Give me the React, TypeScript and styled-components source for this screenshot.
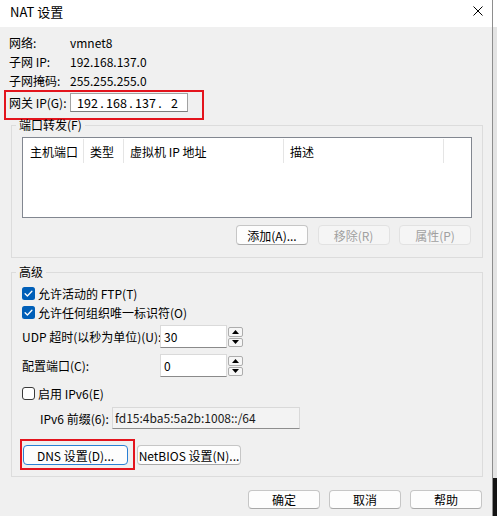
import React from "react";
import styled, { createGlobalStyle, css } from "styled-components";

const GlobalStyle = createGlobalStyle`
  html, body { margin: 0; padding: 0; }
  body {
    width: 497px; height: 516px; overflow: hidden; background: #e6e6e6;
    font-family: "Noto Sans CJK SC", "Noto Sans", sans-serif;
    font-size: 12px; color: #000;
  }
  * { box-sizing: border-box; }
`;

const Screen = styled.div`
  display: flex;
  width: 497px;
  height: 516px;
`;

const Dialog = styled.div`
  width: 493px;
  height: 516px;
  display: flex;
  flex-direction: column;
  background: #f0f0f0;
  border-right: 1px solid #8e8e8e;
`;

const BehindStrip = styled.div`
  flex: 1;
  background: linear-gradient(to bottom, #ffffff 0 27px, #e4e4e4 27px 478px, #141414 478px);
`;

const TitleBar = styled.div`
  height: 27px;
  flex: none;
  background: #ffffff;
  display: flex;
  align-items: flex-start;
  justify-content: space-between;
  padding: 4px 9px 0 10px;
`;

const Title = styled.div`
  font-size: 13px;
  line-height: 16px;
`;

const CloseButton = styled.div`
  width: 10px;
  height: 10px;
  margin-top: 2px;
  display: flex;
`;

const Body = styled.div`
  display: flex;
  flex-direction: column;
  padding-top: 6px;
`;

const InfoGrid = styled.div`
  display: grid;
  grid-template-columns: 61px auto;
  grid-auto-rows: 19px;
  margin-left: 9px;
  line-height: 19px;
`;

const HighlightSlot = styled.div`
  margin-left: 4px;
`;

const Highlight = styled.div<{ $w: number; $h: number; $pad: string }>`
  border: 2px solid #e3141d;
  width: ${(p) => p.$w}px;
  height: ${(p) => p.$h}px;
  padding: ${(p) => p.$pad};
  flex: none;
`;

const GatewayRow = styled.div`
  display: grid;
  grid-template-columns: 61px 118px;
  line-height: 19px;
`;

const IpBox = styled.div`
  height: 19px;
  width: 118px;
  background: #ffffff;
  border: 1px solid #a2a2a2;
  border-bottom-color: #7c7c7c;
  display: grid;
  grid-template-columns: 23px 6px 23px 6px 23px 6px 23px;
  padding-left: 5px;
  font-size: 12.5px;
  line-height: 17px;
  text-align: center;
`;

const Group = styled.fieldset<{ $mt: number }>`
  margin: ${(p) => p.$mt}px 9px 0 11px;
  border: 1px solid #dcdcdc;
  padding: 6px 10px 0 10px;
  min-width: 0;
`;

const Legend = styled.legend`
  font-size: 12px;
  line-height: 12px;
  padding: 0 3px;
  margin-left: -6px;
`;

const ListBox = styled.div`
  height: 81px;
  background: #ffffff;
  border: 1px solid #828790;
`;

const ListHeader = styled.div`
  display: grid;
  grid-template-columns: 61px 40px 160px 160px;
  padding-top: 1px;
`;

const HeaderCell = styled.div<{ $first?: boolean }>`
  height: 24px;
  line-height: 24px;
  padding-top: 1px;
  padding-left: ${(p) => (p.$first ? 7 : 6)}px;
  border-right: 1px solid #e5e5e5;
  white-space: nowrap;
`;

const ButtonRow = styled.div<{ $mt: number; $gap: number; $pr: number; $pb: number }>`
  display: flex;
  justify-content: flex-end;
  gap: ${(p) => p.$gap}px;
  margin-top: ${(p) => p.$mt}px;
  padding-right: ${(p) => p.$pr}px;
  padding-bottom: ${(p) => p.$pb}px;
`;

const Button = styled.div<{ $w: number; $h?: number; $disabled?: boolean; $focus?: boolean }>`
  width: ${(p) => p.$w}px;
  height: ${(p) => p.$h ?? 20}px;
  border-radius: 4px;
  display: flex;
  align-items: center;
  justify-content: center;
  white-space: nowrap;
  font-size: 12px;
  flex: none;
  background: #fdfdfd;
  border: 1px solid #c6c6c6;
  border-bottom-color: #a8a8a8;
  ${(p) =>
    p.$disabled &&
    css`
      background: #f5f5f5;
      border-color: #e2e2e2;
      color: #a0a0a0;
    `}
  ${(p) =>
    p.$focus &&
    css`
      border-color: #2a7fd4;
      background: #fdfdfd;
    `}
`;

const AdvancedBody = styled.div`
  display: flex;
  flex-direction: column;
  padding-bottom: 6px;
`;

const CheckRow = styled.div<{ $mt?: number }>`
  height: 19px;
  display: flex;
  align-items: center;
  gap: 3px;
  margin-top: ${(p) => p.$mt ?? 0}px;
  line-height: 19px;
`;

const FieldRow = styled.div<{ $mt: number; $cols: string; $pl?: number; $h: number }>`
  display: grid;
  grid-template-columns: ${(p) => p.$cols};
  align-items: center;
  height: ${(p) => p.$h}px;
  margin-top: ${(p) => p.$mt}px;
  padding-left: ${(p) => p.$pl ?? 0}px;
  white-space: nowrap;
`;

const Spinner = styled.div`
  display: flex;
  height: 23px;
`;

const SpinInput = styled.div`
  width: 67px;
  height: 23px;
  background: #ffffff;
  border: 1px solid #dadada;
  border-bottom-color: #8a8a8a;
  padding-left: 3px;
  line-height: 21px;
`;

const SpinButtons = styled.div`
  width: 16px;
  display: flex;
  flex-direction: column;
  gap: 1px;
  padding: 2px 0 1px 1px;
`;

const SpinButton = styled.div`
  flex: 1;
  background: #f6f6f6;
  border: 1px solid #adadad;
  border-radius: 2px;
  display: flex;
  align-items: center;
  justify-content: center;
`;

const DisabledInput = styled.div`
  height: 22px;
  background: #f3f3f3;
  border: 1px solid #d9d9d9;
  border-bottom-color: #8e8e8e;
  padding-left: 2px;
  line-height: 20px;
  color: #1a1a1a;
`;

const DnsRow = styled.div`
  display: flex;
  align-items: flex-start;
  gap: 2px;
  margin-top: 10px;
  margin-left: -2px;
`;

const NetBiosWrap = styled.div`
  margin-top: 6px;
`;

const Footer = styled.div`
  display: flex;
  justify-content: flex-end;
  gap: 9px;
  margin-top: 13px;
  padding-right: 10px;
`;

const CheckBox: React.FC<{ checked?: boolean }> = ({ checked }) => (
  <svg width="13" height="13" viewBox="0 0 13 13" style={{ flex: "none" }}>
    {checked ? (
      <>
        <rect x="0" y="0" width="13" height="13" rx="2.5" fill="#005fb8" />
        <path d="M3.1 6.7 L5.4 9 L9.9 4.3" fill="none" stroke="#ffffff" strokeWidth="1.3" strokeLinecap="round" strokeLinejoin="round" />
      </>
    ) : (
      <rect x="0.5" y="0.5" width="12" height="12" rx="2.5" fill="#ffffff" stroke="#3a3a3a" strokeWidth="1" />
    )}
  </svg>
);

const Arrow: React.FC<{ up?: boolean }> = ({ up }) => (
  <svg width="7" height="4" viewBox="0 0 7 4">
    <polygon points={up ? "0,4 3.5,0 7,4" : "0,0 7,0 3.5,4"} fill="#000" />
  </svg>
);

const SpinBox: React.FC<{ value: string }> = ({ value }) => (
  <Spinner>
    <SpinInput>{value}</SpinInput>
    <SpinButtons>
      <SpinButton>
        <Arrow up />
      </SpinButton>
      <SpinButton>
        <Arrow />
      </SpinButton>
    </SpinButtons>
  </Spinner>
);

const ipParts = ["192", "168", "137", "2"];

export default function App() {
  return (
    <>
      <GlobalStyle />
      <Screen>
        <Dialog>
          <TitleBar>
            <Title>NAT 设置</Title>
            <CloseButton>
              <svg width="10" height="10" viewBox="0 0 10 10">
                <path d="M0.5 0.5 L9.5 9.5 M9.5 0.5 L0.5 9.5" stroke="#000" strokeWidth="1" />
              </svg>
            </CloseButton>
          </TitleBar>
          <Body>
            <InfoGrid>
              <span>网络:</span>
              <span>vmnet8</span>
              <span>子网 IP:</span>
              <span>192.168.137.0</span>
              <span>子网掩码:</span>
              <span>255.255.255.0</span>
            </InfoGrid>
            <HighlightSlot>
              <Highlight $w={200} $h={30} $pad="1px 14px 7px 3px">
                <GatewayRow>
                  <span>网关 IP(G):</span>
                  <IpBox>
                    {ipParts.map((part, i) => (
                      <React.Fragment key={i}>
                        {i > 0 && <span>.</span>}
                        <span>{part}</span>
                      </React.Fragment>
                    ))}
                  </IpBox>
                </GatewayRow>
              </Highlight>
            </HighlightSlot>
            <Group $mt={-1}>
              <Legend>端口转发(F)</Legend>
              <ListBox>
                <ListHeader>
                  <HeaderCell $first>主机端口</HeaderCell>
                  <HeaderCell>类型</HeaderCell>
                  <HeaderCell>虚拟机 IP 地址</HeaderCell>
                  <HeaderCell>描述</HeaderCell>
                </ListHeader>
              </ListBox>
              <ButtonRow $mt={7} $gap={9.5} $pr={1} $pb={12}>
                <Button $w={72}>添加(A)...</Button>
                <Button $w={72} $disabled>
                  移除(R)
                </Button>
                <Button $w={72} $disabled>
                  属性(P)
                </Button>
              </ButtonRow>
            </Group>
            <Group $mt={8}>
              <Legend>高级</Legend>
              <AdvancedBody>
                <CheckRow>
                  <CheckBox checked />
                  <span>允许活动的 FTP(T)</span>
                </CheckRow>
                <CheckRow>
                  <CheckBox checked />
                  <span>允许任何组织唯一标识符(O)</span>
                </CheckRow>
                <FieldRow $mt={3} $cols="138px auto" $h={23}>
                  <span>UDP 超时(以秒为单位)(U):</span>
                  <SpinBox value="30" />
                </FieldRow>
                <FieldRow $mt={6} $cols="138px auto" $h={23}>
                  <span>配置端口(C):</span>
                  <SpinBox value="0" />
                </FieldRow>
                <CheckRow $mt={7}>
                  <CheckBox />
                  <span>启用 IPv6(E)</span>
                </CheckRow>
                <FieldRow $mt={4} $cols="72px 188px" $pl={18} $h={22}>
                  <span>IPv6 前缀(6):</span>
                  <DisabledInput>fd15:4ba5:5a2b:1008::/64</DisabledInput>
                </FieldRow>
                <DnsRow>
                  <Highlight $w={115} $h={31} $pad="4px 6px 0 1px">
                    <Button $w={105} $focus>
                      DNS 设置(D)...
                    </Button>
                  </Highlight>
                  <NetBiosWrap>
                    <Button $w={104}>NetBIOS 设置(N)...</Button>
                  </NetBiosWrap>
                </DnsRow>
              </AdvancedBody>
            </Group>
            <Footer>
              <Button $w={72} $h={19}>确定</Button>
              <Button $w={72} $h={19}>取消</Button>
              <Button $w={72} $h={19}>帮助</Button>
            </Footer>
          </Body>
        </Dialog>
        <BehindStrip />
      </Screen>
    </>
  );
}
